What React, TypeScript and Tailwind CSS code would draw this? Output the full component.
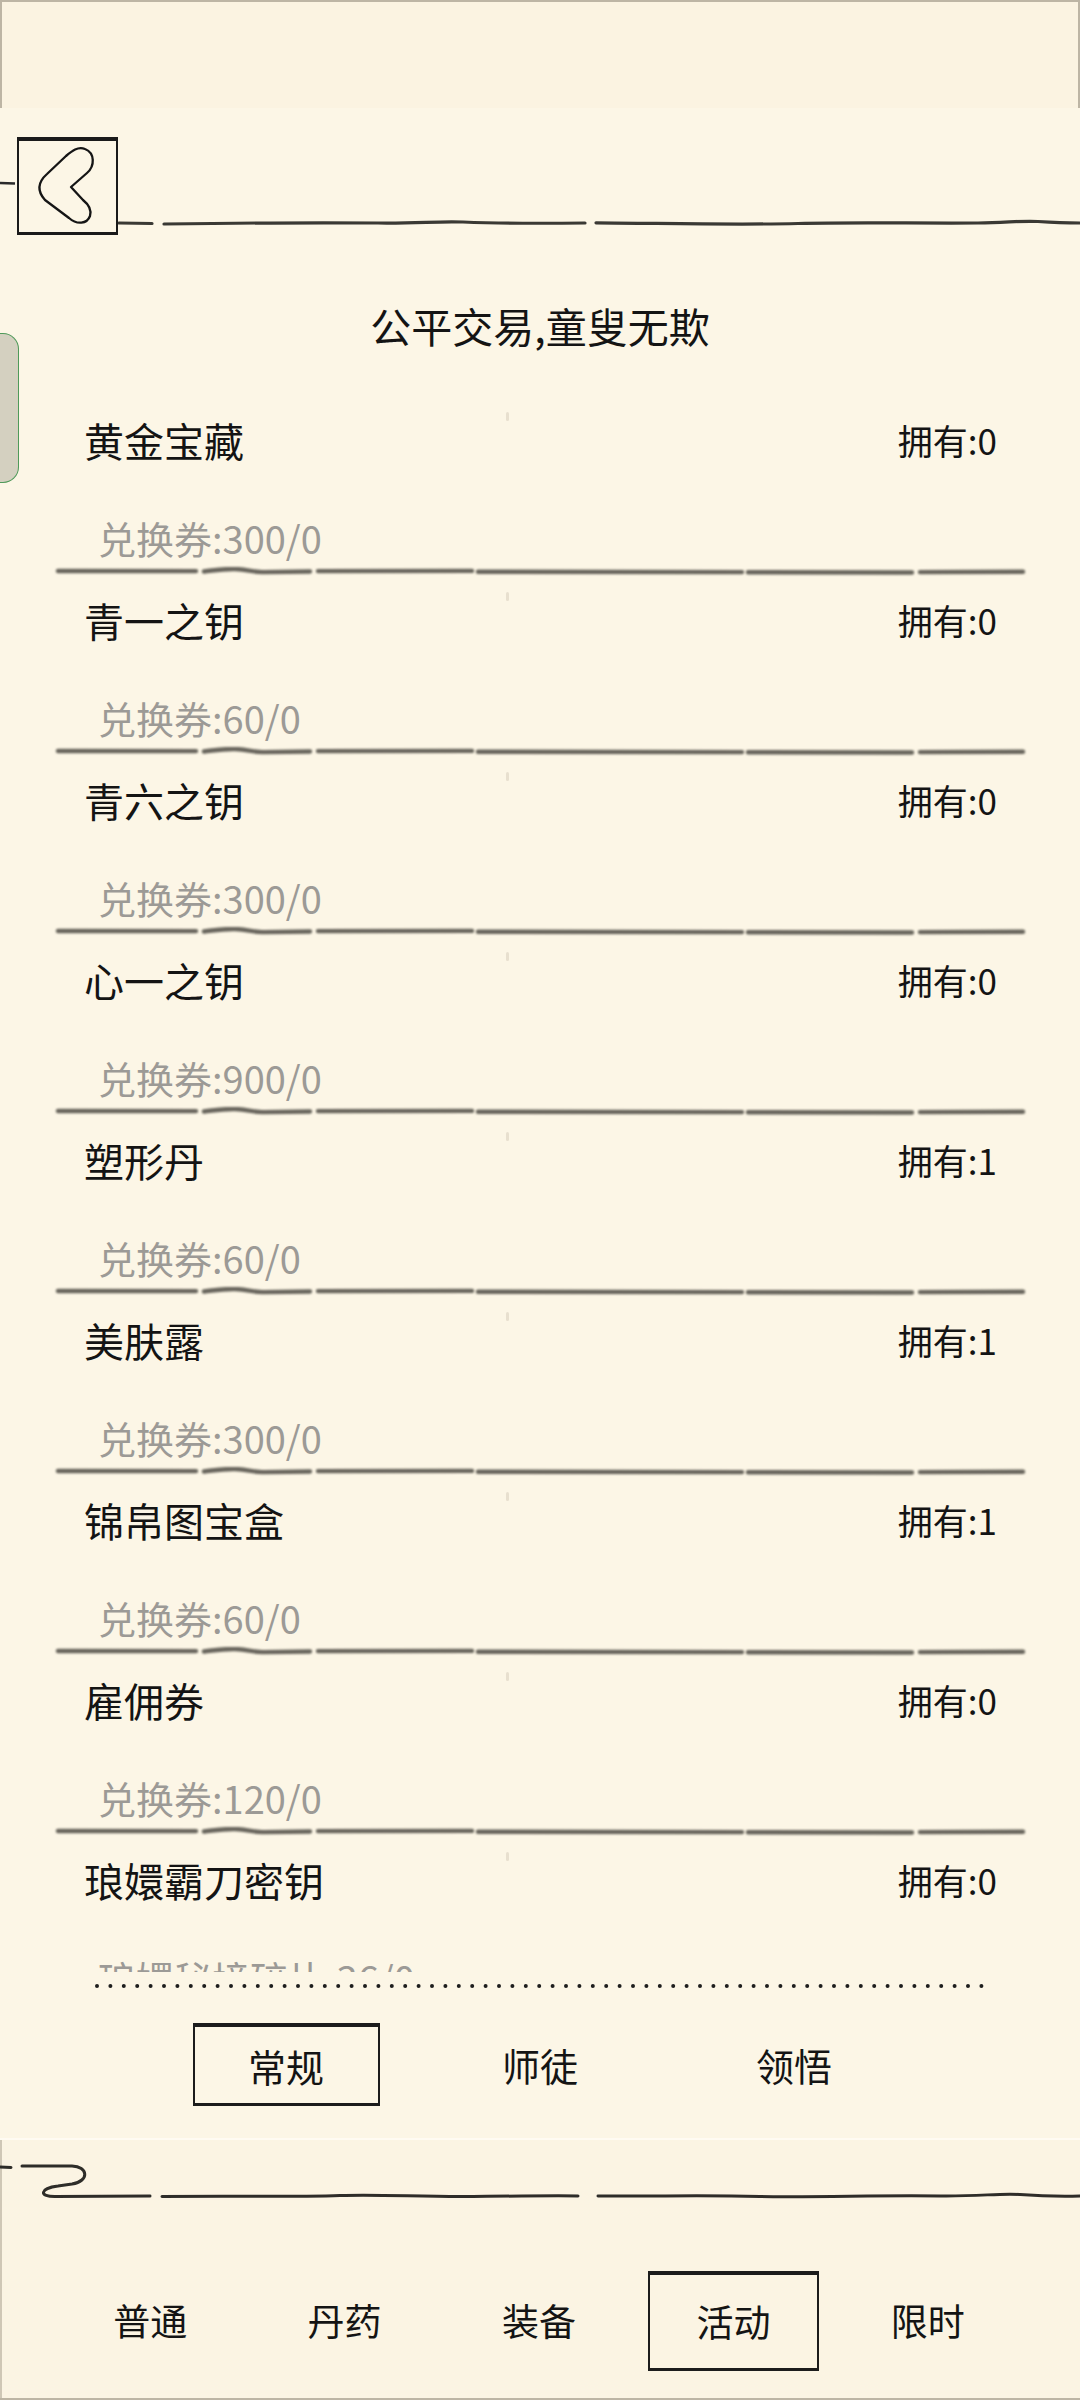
import React from 'react';

type Item = { name: string; own: number; cost: string };

const items: Item[] = [
  { name: '黄金宝藏', own: 0, cost: '兑换券:300/0' },
  { name: '青一之钥', own: 0, cost: '兑换券:60/0' },
  { name: '青六之钥', own: 0, cost: '兑换券:300/0' },
  { name: '心一之钥', own: 0, cost: '兑换券:900/0' },
  { name: '塑形丹', own: 1, cost: '兑换券:60/0' },
  { name: '美肤露', own: 1, cost: '兑换券:300/0' },
  { name: '锦帛图宝盒', own: 1, cost: '兑换券:60/0' },
  { name: '雇佣券', own: 0, cost: '兑换券:120/0' },
  { name: '琅嬛霸刀密钥', own: 0, cost: '琅嬛秘境碎片:36/0' },
];

const subTabs = ['常规', '师徒', '领悟'];
const mainTabs = ['普通', '丹药', '装备', '活动', '限时'];

// sketchy brush divider under each row
function BrushLine() {
  return (
    <svg width="1080" height="8" viewBox="0 0 1080 8" className="block shrink-0 blur-[0.8px]">
      <g fill="none" stroke="#4d4b43" strokeWidth="4.4" strokeLinecap="round" opacity="0.85">
        <path d="M58 4 L196 4.1" />
        <path d="M204 4.5 C214 3.5 221 1.8 235 2 C248 2.4 252 5.5 264 5.1 L310 4.5" />
        <path d="M318 4.1 L472 3.9" />
        <path d="M478 4.7 L742 5.1" />
        <path d="M748 5.3 L912 5.5" />
        <path d="M920 5.1 L1023 4.7" />
      </g>
    </svg>
  );
}

function Row({ item }: { item: Item }) {
  return (
    <div className="relative h-[180px] shrink-0 flex flex-col">
      <span className="absolute left-[506px] top-[17px] h-[9px] w-[3px] rounded-full bg-[#e8e0cf]" />
      <div className="flex items-center justify-between pl-[84px] pr-[83px] pt-[25px]">
        <span className="text-[40px] leading-[40px] text-[#141414]">{item.name}</span>
        <span className="text-[35px] leading-[40px] text-[#141414]">拥有:{item.own}</span>
      </div>
      <div className="mt-[58px] pl-[98px] text-[38px] leading-[40px] text-[#9c9a96]">{item.cost}</div>
      <div className="mt-[9px]">
        <BrushLine />
      </div>
    </div>
  );
}

export default function App() {
  return (
    <div className="relative w-[1080px] h-[2400px] flex flex-col overflow-hidden bg-[#fbf4e3] font-['Noto_Sans_CJK_SC','Noto_Sans',sans-serif] shadow-[inset_2px_0_0_#cfc7b6]">
      {/* faixa superior */}
      <div className="h-[108px] shrink-0 border-2 border-b-0 border-[#bdb5a4] bg-[#fbf3e1]" />

      {/* painel da loja */}
      <div className="h-[2032px] shrink-0 flex flex-col bg-[#fcf6e6] border-b-2 border-[#fffbf2]">
        {/* cabeçalho com botão voltar */}
        <div className="mt-[29px] flex items-start">
          <svg width="17" height="98" viewBox="0 0 17 98" className="shrink-0">
            <path d="M0 46 L15 46.5" stroke="#2a2a2a" strokeWidth="2.6" fill="none" />
          </svg>
          <button className="w-[101px] h-[98px] shrink-0 border-2 border-t-4 border-b-[3px] border-[#1a1a1a] bg-transparent p-0">
            <svg width="97" height="91" viewBox="0 0 97 91" className="block">
              <g transform="translate(-2,-4)">
                <path
                  d="M54 50 L70 36 C78 29 78 16 68 12 C61 9 55 14 49 19 L30 37 C21 45 20 54 28 63 L52 81 C60 88 70 87 73 79 C75 72 71 67 66 63 Z"
                  fill="none"
                  stroke="#151515"
                  strokeWidth="2.3"
                  strokeLinejoin="round"
                />
              </g>
            </svg>
          </button>
          <svg width="962" height="98" viewBox="0 0 962 98" className="shrink-0 blur-[0.4px]">
            <g fill="none" stroke="#3a3934" strokeWidth="3.2" strokeLinecap="round">
              <path d="M1 86 L34 86.5" />
              <path d="M46 87 C120 86 200 85.5 260 86 C300 86.5 320 84 345 85 C370 86 420 86.5 467 86" />
              <path d="M478 85.8 C560 86.5 620 88 680 86.5 C740 85 800 86.5 860 86 C890 85.5 905 83.5 920 84.5 C935 85.5 950 86 962 86" />
            </g>
          </svg>
        </div>

        {/* título */}
        <div className="mt-[65px] h-[50px] text-center text-[41px] leading-[50px] text-[#141414]">公平交易,童叟无欺</div>

        {/* lista de itens */}
        <div className="mt-[45px] h-[1577px] shrink-0 flex flex-col overflow-hidden">
          {items.map((it) => (
            <Row key={it.name} item={it} />
          ))}
        </div>

        {/* linha pontilhada */}
        <svg width="1080" height="8" viewBox="0 0 1080 8" className="mt-[10px] block shrink-0">
          <path d="M97 4 L985 4" stroke="#1e1e1e" strokeWidth="4" strokeLinecap="round" strokeDasharray="0 13.4" fill="none" />
        </svg>

        {/* sub abas */}
        <div className="mt-[33px] flex justify-center">
          {subTabs.map((t, i) => (
            <div key={t} className="w-[254px] h-[83px] flex items-center justify-center">
              {i === 0 ? (
                <div className="w-[187px] h-[83px] flex items-center justify-center border-2 border-t-4 border-b-[3px] border-[#1c1c1c] text-[38px] text-[#141414]">
                  {t}
                </div>
              ) : (
                <span className="text-[38px] text-[#141414]">{t}</span>
              )}
            </div>
          ))}
        </div>
      </div>

      {/* rodapé com abas principais */}
      <div className="flex-1 flex flex-col border-b-2 border-[#bdb5a4]">
        <svg width="1080" height="45" viewBox="0 0 1080 45" className="mt-[18px] block shrink-0 blur-[0.4px]">
          <g fill="none" stroke="#2e2d29" strokeWidth="3" strokeLinecap="round">
            <path d="M0 9 L11 9.5" />
            <path d="M22 8 L72 8 C88 8.5 90 23 72 26 L58 28 C40 30 38 39 56 38.5 L150 38" />
            <path d="M162 38.5 C240 38 300 39 340 37.5 C380 36 420 39 470 38.5 C520 38 560 37.5 578 38" />
            <path d="M598 38 C660 38.5 700 37 760 38.5 C820 39.5 880 37 940 38 C980 38.5 1000 35 1020 36.5 C1040 38 1060 38.5 1080 38" />
          </g>
        </svg>
        <div className="mt-[68px] ml-[53px] w-[972px] grid grid-cols-5">
          {mainTabs.map((t, i) => (
            <div key={t} className="h-[100px] flex items-center justify-center">
              {i === 3 ? (
                <div className="w-[171px] h-[100px] flex items-center justify-center border-2 border-t-4 border-b-[3px] border-[#1c1c1c] text-[37px] text-[#141414]">
                  {t}
                </div>
              ) : (
                <span className="text-[37px] text-[#141414]">{t}</span>
              )}
            </div>
          ))}
        </div>
      </div>

      {/* alça lateral */}
      <div className="absolute left-0 top-[333px] w-[19px] h-[150px] rounded-r-[16px] border border-l-0 border-[#4f9a5a] bg-[#d4d0c0]" />
    </div>
  );
}
